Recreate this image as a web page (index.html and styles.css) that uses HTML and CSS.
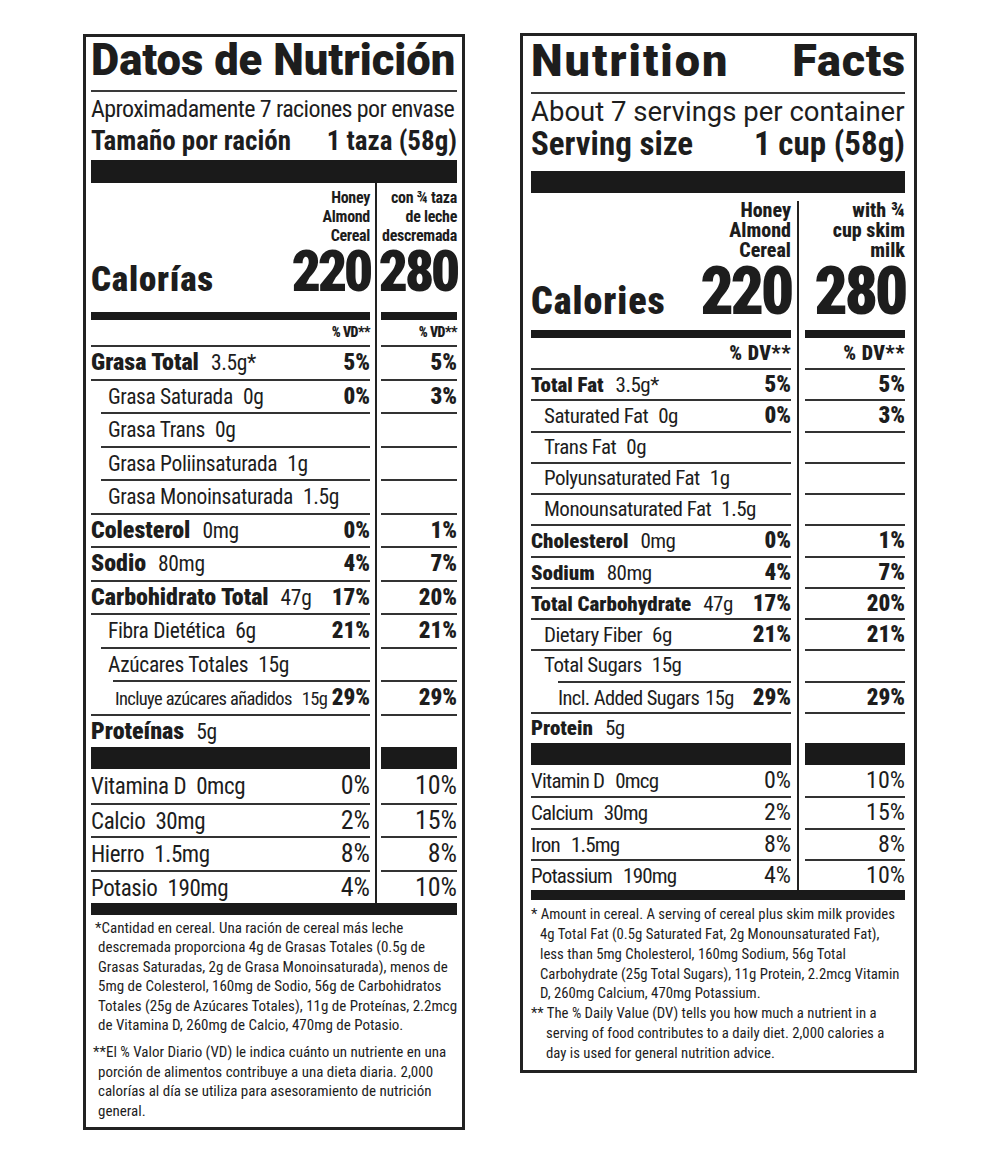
FILE: index.html
```html
<!DOCTYPE html>
<html lang="es">
<head>
<meta charset="utf-8">
<title>Datos de Nutrición / Nutrition Facts</title>
<link rel="stylesheet" href="styles.css">
</head>
<body>
<main class="page">
  <section class="label es" lang="es">
    <h1 class="title">Datos de Nutrición</h1>
    <p class="servings">Aproximadamente 7 raciones por envase</p>
    <p class="size"><span>Tamaño por ración</span><span>1 taza (58g)</span></p>
    <div class="bar"></div>
    <div class="facts">
      <div class="divider"></div>
      <div class="c1 hdr">Honey<br>Almond<br>Cereal</div>
      <div class="c2 hdr">con ¾ taza<br>de leche<br>descremada</div>
      <div class="c1 cal"><span class="cal-label">Calorías</span><span class="cal-num">220</span></div>
      <div class="c2 cal"><span class="cal-num">280</span></div>
      <div class="c1 dvh">% VD**</div>
      <div class="c2 dvh">% VD**</div>

      <div class="c1 row"><span class="lbl"><b>Grasa Total</b><span class="amt">3.5g*</span></span><b class="pc">5%</b></div>
      <div class="c2 row"><b class="pc">5%</b></div>
      <div class="c1 row in"><span class="lbl">Grasa Saturada<span class="amt">0g</span></span><b class="pc">0%</b></div>
      <div class="c2 row"><b class="pc">3%</b></div>
      <div class="c1 row in li"><span class="lbl">Grasa Trans<span class="amt">0g</span></span></div>
      <div class="c2 row"></div>
      <div class="c1 row in li"><span class="lbl">Grasa Poliinsaturada<span class="amt">1g</span></span></div>
      <div class="c2 row"></div>
      <div class="c1 row in li"><span class="lbl">Grasa Monoinsaturada<span class="amt">1.5g</span></span></div>
      <div class="c2 row"></div>
      <div class="c1 row"><span class="lbl"><b>Colesterol</b><span class="amt">0mg</span></span><b class="pc">0%</b></div>
      <div class="c2 row"><b class="pc">1%</b></div>
      <div class="c1 row"><span class="lbl"><b>Sodio</b><span class="amt">80mg</span></span><b class="pc">4%</b></div>
      <div class="c2 row"><b class="pc">7%</b></div>
      <div class="c1 row"><span class="lbl"><b>Carbohidrato Total</b><span class="amt">47g</span></span><b class="pc">17%</b></div>
      <div class="c2 row"><b class="pc">20%</b></div>
      <div class="c1 row in"><span class="lbl">Fibra Dietética<span class="amt">6g</span></span><b class="pc">21%</b></div>
      <div class="c2 row"><b class="pc">21%</b></div>
      <div class="c1 row in li"><span class="lbl">Azúcares Totales<span class="amt">15g</span></span></div>
      <div class="c2 row"></div>
      <div class="c1 row in2"><span class="lbl">Incluye azúcares añadidos<span class="amt">15g</span></span><b class="pc">29%</b></div>
      <div class="c2 row"><b class="pc">29%</b></div>
      <div class="c1 row"><span class="lbl"><b>Proteínas</b><span class="amt">5g</span></span></div>
      <div class="c2 row"></div>

      <div class="c1 blk"></div>
      <div class="c2 blk"></div>

      <div class="c1 vit first"><span class="lbl">Vitamina D<span class="amt">0mcg</span></span><span class="pc">0%</span></div>
      <div class="c2 vit first"><span class="pc">10%</span></div>
      <div class="c1 vit"><span class="lbl">Calcio<span class="amt">30mg</span></span><span class="pc">2%</span></div>
      <div class="c2 vit"><span class="pc">15%</span></div>
      <div class="c1 vit"><span class="lbl">Hierro<span class="amt">1.5mg</span></span><span class="pc">8%</span></div>
      <div class="c2 vit"><span class="pc">8%</span></div>
      <div class="c1 vit"><span class="lbl">Potasio<span class="amt">190mg</span></span><span class="pc">4%</span></div>
      <div class="c2 vit"><span class="pc">10%</span></div>
    </div>
    <div class="bar-end"></div>
    <div class="notes">
      <p class="n1">*Cantidad en cereal. Una ración de cereal más leche<br>descremada proporciona 4g de Grasas Totales (0.5g de<br>Grasas Saturadas, 2g de Grasa Monoinsaturada), menos de<br>5mg de Colesterol, 160mg de Sodio, 56g de Carbohidratos<br>Totales (25g de Azúcares Totales), 11g de Proteínas, 2.2mcg<br>de Vitamina D, 260mg de Calcio, 470mg de Potasio.</p>
      <p class="n2">**El % Valor Diario (VD) le indica cuánto un nutriente en una<br>porción de alimentos contribuye a una dieta diaria. 2,000<br>calorías al día se utiliza para asesoramiento de nutrición<br>general.</p>
    </div>
  </section>

  <section class="label en" lang="en">
    <h1 class="title"><span class="w1">Nutrition</span><span>Facts</span></h1>
    <p class="servings">About 7 servings per container</p>
    <p class="size"><span>Serving size</span><span>1 cup (58g)</span></p>
    <div class="bar"></div>
    <div class="facts">
      <div class="divider"></div>
      <div class="c1 hdr">Honey<br>Almond<br>Cereal</div>
      <div class="c2 hdr">with ¾<br>cup skim<br>milk</div>
      <div class="c1 cal"><span class="cal-label">Calories</span><span class="cal-num">220</span></div>
      <div class="c2 cal"><span class="cal-num">280</span></div>
      <div class="c1 dvh">% DV**</div>
      <div class="c2 dvh">% DV**</div>

      <div class="c1 row"><span class="lbl"><b>Total Fat</b><span class="amt">3.5g*</span></span><b class="pc">5%</b></div>
      <div class="c2 row"><b class="pc">5%</b></div>
      <div class="c1 row in"><span class="lbl">Saturated Fat<span class="amt">0g</span></span><b class="pc">0%</b></div>
      <div class="c2 row"><b class="pc">3%</b></div>
      <div class="c1 row in"><span class="lbl">Trans Fat<span class="amt">0g</span></span></div>
      <div class="c2 row"></div>
      <div class="c1 row in"><span class="lbl">Polyunsaturated Fat<span class="amt">1g</span></span></div>
      <div class="c2 row"></div>
      <div class="c1 row in"><span class="lbl">Monounsaturated Fat<span class="amt">1.5g</span></span></div>
      <div class="c2 row"></div>
      <div class="c1 row"><span class="lbl"><b>Cholesterol</b><span class="amt">0mg</span></span><b class="pc">0%</b></div>
      <div class="c2 row"><b class="pc">1%</b></div>
      <div class="c1 row"><span class="lbl"><b>Sodium</b><span class="amt">80mg</span></span><b class="pc">4%</b></div>
      <div class="c2 row"><b class="pc">7%</b></div>
      <div class="c1 row"><span class="lbl"><b>Total Carbohydrate</b><span class="amt">47g</span></span><b class="pc">17%</b></div>
      <div class="c2 row"><b class="pc">20%</b></div>
      <div class="c1 row in"><span class="lbl">Dietary Fiber<span class="amt">6g</span></span><b class="pc">21%</b></div>
      <div class="c2 row"><b class="pc">21%</b></div>
      <div class="c1 row in"><span class="lbl">Total Sugars<span class="amt">15g</span></span></div>
      <div class="c2 row"></div>
      <div class="c1 row in2"><span class="lbl">Incl. Added Sugars<span class="amt">15g</span></span><b class="pc">29%</b></div>
      <div class="c2 row"><b class="pc">29%</b></div>
      <div class="c1 row"><span class="lbl"><b>Protein</b><span class="amt">5g</span></span></div>
      <div class="c2 row"></div>

      <div class="c1 blk"></div>
      <div class="c2 blk"></div>

      <div class="c1 vit first"><span class="lbl">Vitamin D<span class="amt">0mcg</span></span><span class="pc">0%</span></div>
      <div class="c2 vit first"><span class="pc">10%</span></div>
      <div class="c1 vit"><span class="lbl">Calcium<span class="amt">30mg</span></span><span class="pc">2%</span></div>
      <div class="c2 vit"><span class="pc">15%</span></div>
      <div class="c1 vit"><span class="lbl">Iron<span class="amt">1.5mg</span></span><span class="pc">8%</span></div>
      <div class="c2 vit"><span class="pc">8%</span></div>
      <div class="c1 vit"><span class="lbl">Potassium<span class="amt">190mg</span></span><span class="pc">4%</span></div>
      <div class="c2 vit"><span class="pc">10%</span></div>
    </div>
    <div class="bar-end"></div>
    <div class="notes">
      <p class="n1">* Amount in cereal. A serving of cereal plus skim milk provides<br>4g Total Fat (0.5g Saturated Fat, 2g Monounsaturated Fat),<br>less than 5mg Cholesterol, 160mg Sodium, 56g Total<br>Carbohydrate (25g Total Sugars), 11g Protein, 2.2mcg Vitamin<br>D, 260mg Calcium, 470mg Potassium.</p>
      <p class="n2">** The % Daily Value (DV) tells you how much a nutrient in a<br>serving of food contributes to a daily diet. 2,000 calories a<br>day is used for general nutrition advice.</p>
    </div>
  </section>
</main>
</body>
</html>
```

FILE: styles.css
```css
* { box-sizing: border-box; margin: 0; padding: 0; }

body {
  margin: 0;
  background: #fff;
  color: #1d1d1d;
  font-family: "Roboto", "Roboto Condensed", "Liberation Sans", sans-serif;
  font-stretch: 75%;
}

b { font-weight: 700; }

.page {
  display: flex;
  align-items: flex-start;
  gap: 55px;
  padding: 34px 0 0 83px;
}

.label {
  border: 3px solid #222;
  display: flex;
  flex-direction: column;
}

/* ================= shared ================= */
.title {
  font-weight: 900;
  font-stretch: 100%;
  line-height: 48px;
  white-space: nowrap;
  border-bottom: 2px solid #3a3a3a;
}
.servings { white-space: nowrap; }
.size {
  display: flex;
  justify-content: space-between;
  font-weight: 700;
  white-space: nowrap;
}
.bar, .bar-end, .blk { background: #1a1a1a; }

.facts { display: grid; }
.divider {
  grid-column: 2;
  grid-row: 1 / span 20;
  display: flex;
  justify-content: center;
}
.divider::before { content: ""; width: 2px; background: #222; }
.c1 { grid-column: 1; min-width: 0; }
.c2 { grid-column: 3; min-width: 0; }

.hdr { text-align: right; font-weight: 700; white-space: nowrap; }
.cal {
  display: flex;
  justify-content: space-between;
  align-items: baseline;
  border-bottom: 8px solid #1a1a1a;
}
.c2.cal { justify-content: flex-end; }
.cal-label { font-weight: 900; }
.cal-num { font-weight: 900; }
.dvh { text-align: right; font-weight: 900; white-space: nowrap; }

.row, .vit {
  display: flex;
  justify-content: space-between;
  align-items: baseline;
  border-top: 2px solid #333;
  white-space: nowrap;
}
.c2.row, .c2.vit { justify-content: flex-end; }
.vit.first { border-top: 0; }
.lbl b { font-weight: 900; letter-spacing: 0; }
.amt { margin-left: 10px; }
.lbl b + .amt { margin-left: 12px; }
.pc { font-weight: 900; }
.vit .pc { font-weight: 400; }
.blk { height: 22px; }
.notes p { white-space: nowrap; }

/* ================= Spanish label ================= */
.es { width: 382px; height: 1096px; padding: 0 5px; }
.es .title { font-size: 43.5px; padding-bottom: 5px; }
.es .servings { font-size: 24px; letter-spacing: -0.6px; line-height: 28px; padding-top: 3px; }
.es .size { font-size: 27px; line-height: 30px; margin-top: 3px; }
.es .bar { margin-top: 4px; height: 23px; }
.es .facts { grid-template-columns: minmax(0, 1fr) 11px 76px; }
.es .hdr { font-size: 16px; letter-spacing: -0.3px; line-height: 19px; padding-top: 5px; }
.es .cal { padding-bottom: 15px; }
.es .cal-label { font-size: 35px; letter-spacing: 0.8px; line-height: 30px; }
.es .cal-num { font-size: 58px; letter-spacing: -3.5px; line-height: 52px; }
.es .dvh { font-size: 14px; letter-spacing: -0.5px; line-height: 25px; }
.es .row { height: 33.5px; line-height: 31.5px; font-size: 23px; }
.es .row .lbl { font-size: 21.5px; letter-spacing: -0.35px; }
.es .row .lbl b { font-size: 24px; }
.es .row.in { padding-left: 17px; }
.es .row.in.li { margin-left: 10px; padding-left: 7px; }
.es .row.in2 { margin-left: 22px; padding-left: 2px; }
.es .row.in2 .lbl { font-size: 18.5px; letter-spacing: -0.65px; }
.es .vit { height: 33.5px; line-height: 31.5px; font-size: 26px; }
.es .vit .lbl { font-size: 23px; letter-spacing: -0.4px; }
.es .vit.first { line-height: 33.5px; }
.es .bar-end { height: 12px; }
.es .notes { font-size: 15px; line-height: 19.4px; padding-top: 4px; }
.es .notes p { padding-left: 7px; }
.es .notes .n1 { text-indent: -3px; }
.es .notes .n2 { text-indent: -5px; margin-top: 8px; }

/* ================= English label ================= */
.en { width: 397px; height: 1040px; padding: 0 9px 0 8px; margin-top: -1px; }
.en .title { display: flex; justify-content: space-between; font-size: 45px; letter-spacing: 0.8px; padding-top: 1px; padding-bottom: 7px; }
.en .title .w1 { letter-spacing: 2px; }
.en .title span:last-child { margin-right: -1px; }
.en .servings { font-size: 27.5px; font-stretch: 100%; line-height: 28px; padding-top: 3.5px; }
.en .size { font-size: 33px; line-height: 32px; margin-top: 2.7px; }
.en .bar { margin-top: 11px; height: 22px; }
.en .facts { grid-template-columns: minmax(0, 1fr) 14px 100px; }
.en .divider { padding-top: 8px; }
.en .hdr { font-size: 20px; font-weight: 800; line-height: 20px; padding-top: 7px; }
.en .cal { padding-top: 4px; padding-bottom: 10px; }
.en .cal-label { font-size: 38px; letter-spacing: 1px; line-height: 30px; }
.en .cal-num { font-size: 66px; letter-spacing: -3.5px; line-height: 56px; }
.en .dvh { font-size: 20px; letter-spacing: 0.5px; line-height: 30px; }
.en .row { height: 31.25px; line-height: 29.25px; font-size: 23px; }
.en .row .lbl { font-size: 21px; letter-spacing: -0.5px; }
.en .row .lbl b { font-size: 21px; }
.en .row.in { padding-left: 13px; }
.en .row.in2 { margin-left: 27px; padding-left: 0; }
.en .row.in2 .lbl { font-size: 20.5px; letter-spacing: -0.6px; }
.en .row.in2 .amt { margin-left: 6px; }
.en .vit { height: 31.25px; line-height: 29.25px; font-size: 24px; }
.en .vit .lbl { font-size: 21px; letter-spacing: -0.8px; }
.en .vit .amt { margin-left: 11px; }
.en .vit.first { line-height: 31.25px; }
.en .bar-end { height: 10px; }
.en .notes { font-size: 14.75px; line-height: 19.8px; padding-top: 5px; }
.en .notes .n1 { padding-left: 9px; text-indent: -9px; }
.en .notes .n2 { padding-left: 15px; text-indent: -15px; }
```
